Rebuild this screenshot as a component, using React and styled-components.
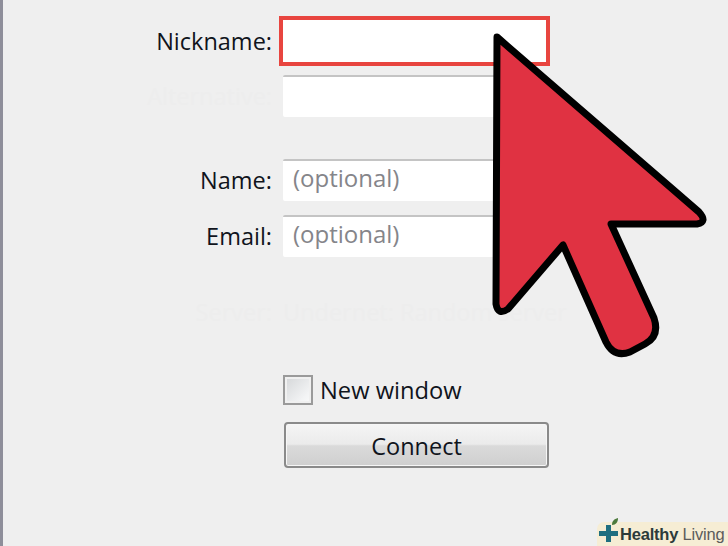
import React from "react";
import styled, { createGlobalStyle } from "styled-components";

const GlobalStyle = createGlobalStyle`
  html, body {
    margin: 0;
    padding: 0;
    background: #efefef;
  }
`;

const Page = styled.div`
  position: relative;
  box-sizing: border-box;
  width: 728px;
  height: 546px;
  overflow: hidden;
  padding-top: 20px;
  background: #efefef;
  border-left: 3px solid #8e8e9a;
  font-family: "Open Sans", "Noto Sans", sans-serif;
  color: #10141c;
`;

const Row = styled.div`
  display: grid;
  grid-template-columns: 269px 263px;
  column-gap: 11px;
  align-items: center;
  height: ${(props) => props.height || 42}px;
  margin-bottom: ${(props) => props.gap || 0}px;
`;

const Label = styled.label`
  justify-self: end;
  font-size: 23.5px;
  line-height: 30px;
  color: ${(props) => (props.faint ? "#ededed" : "#10141c")};
`;

const Input = styled.input`
  box-sizing: border-box;
  width: 100%;
  height: 100%;
  padding: 0 10px 7px;
  border: 0;
  border-top: 2px solid ${(props) => (props.highlight ? "#fff" : "#c4c4c4")};
  border-radius: ${(props) => (props.highlight ? 0 : 2)}px;
  background: #fff;
  font: 24px "Open Sans", "Noto Sans", sans-serif;
  outline: ${(props) => (props.highlight ? "4px solid #e8453f" : "none")};

  &::placeholder {
    color: #85858a;
    opacity: 1;
  }
`;

const FaintText = styled.div`
  font-size: 23.5px;
  line-height: 30px;
  color: #ededed;
  white-space: nowrap;
`;

const CheckRow = styled.div`
  display: flex;
  align-items: center;
  gap: 7px;
  height: 30px;
  margin: 0 0 17px 280px;
  font-size: 23.7px;
`;

const CheckBox = styled.span`
  box-sizing: border-box;
  width: 30px;
  height: 30px;
  border: 2px solid #9a9a9a;
  background: linear-gradient(135deg, #d4d6d8 0%, #f2f3f4 75%, #fafafa 100%);
  box-shadow: inset 0 0 0 2px #f0f0f0;
`;

const ConnectButton = styled.button`
  display: block;
  box-sizing: border-box;
  width: 265px;
  height: 46px;
  margin-left: 281px;
  padding: 2px 0 0;
  border: 2px solid #8a8a8a;
  border-radius: 4px;
  background: linear-gradient(#f5f5f5 0%, #ebebeb 48%, #dadada 52%, #cfcfcf 100%);
  box-shadow: inset 0 0 0 1px #f6f6f6;
  font: 23.5px "Open Sans", "Noto Sans", sans-serif;
  color: #10141c;
`;

const Cursor = styled.svg`
  position: absolute;
  left: -3px;
  top: 0;
  pointer-events: none;
`;

const Watermark = styled.div`
  position: absolute;
  right: 0;
  bottom: 0;
  display: flex;
  align-items: center;
  width: 131px;
  box-sizing: border-box;
  height: 24px;
  padding-left: 1px;
  border-top-left-radius: 7px;
  background: #f6edd4;
  font-family: "Liberation Sans", Arial, sans-serif;
  font-size: 16.5px;
  letter-spacing: -0.2px;
  color: #5c5c5c;
  white-space: nowrap;

  b {
    color: #2c3a3a;
  }
`;

const LogoMark = styled.svg`
  flex: none;
  margin-top: -10px;
`;

export default function App() {
  return (
    <Page>
      <GlobalStyle />
      <Row gap={13}>
        <Label>Nickname:</Label>
        <Input highlight />
      </Row>
      <Row gap={42}>
        <Label faint>Alternative:</Label>
        <Input />
      </Row>
      <Row gap={14}>
        <Label>Name:</Label>
        <Input placeholder="(optional)" />
      </Row>
      <Row gap={40}>
        <Label>Email:</Label>
        <Input placeholder="(optional)" />
      </Row>
      <Row height={30} gap={48}>
        <Label faint>Server:</Label>
        <FaintText>Undernet: Random server</FaintText>
      </Row>
      <CheckRow>
        <CheckBox />
        New window
      </CheckRow>
      <ConnectButton>Connect</ConnectButton>

      <Cursor width="728" height="546" viewBox="0 0 728 546">
        <path
          d="M497 37 L699 212 Q708 222 697 224 L611 224 L654 318 Q660 336 645 344 L630 352 Q614 358 606 342 L563 245 L508 309 Q498 316 496 304 Z"
          fill="#e03242"
          stroke="#000"
          strokeWidth="7"
          strokeLinejoin="round"
        />
      </Cursor>

      <Watermark>
        <LogoMark width="22" height="26" viewBox="0 0 22 26">
          <path d="M8 9h5v6h7v5h-7v6H8v-6H1v-5h7z" fill="#1f6f80" />
          <path d="M14 9c0-4 2-6 6-7 0 4-2 7-6 7z" fill="#4c7a3c" />
        </LogoMark>
        <b>Healthy</b>&nbsp;Living
      </Watermark>
    </Page>
  );
}
